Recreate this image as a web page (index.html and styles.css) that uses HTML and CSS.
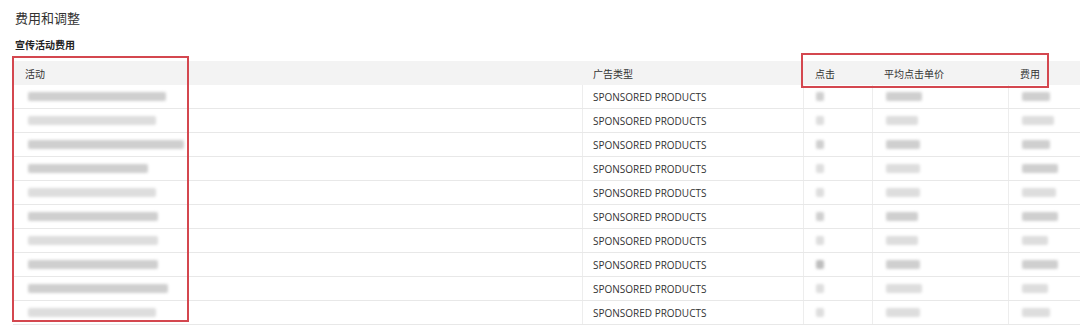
FILE: index.html
```html
<!DOCTYPE html>
<html lang="zh-CN">
  <head>
    <meta charset="UTF-8" />
    <meta name="viewport" content="width=device-width, initial-scale=1.0" />
    <title>费用和调整</title>
    <link rel="stylesheet" href="styles.css">
  </head>
  <body>
    <!-- Título da seção -->
    <h1 class="page-title">费用和调整</h1>
    <h2 class="sub-title">宣传活动费用</h2>

    <div class="table-wrap">
      <div class="grid">
        <div class="row head">
          <div class="cell">活动</div>
          <div class="cell">广告类型</div>
          <div class="cell">点击</div>
          <div class="cell">平均点击单价</div>
          <div class="cell">费用</div>
        </div>

        <div class="row">
          <div class="cell"><span class="mask" style="width:138px"></span></div>
          <div class="cell">SPONSORED PRODUCTS</div>
          <div class="cell"><span class="mask small"></span></div>
          <div class="cell"><span class="mask" style="width:36px"></span></div>
          <div class="cell"><span class="mask" style="width:28px"></span></div>
        </div>
        <div class="row">
          <div class="cell"><span class="mask light" style="width:128px"></span></div>
          <div class="cell">SPONSORED PRODUCTS</div>
          <div class="cell"><span class="mask small light"></span></div>
          <div class="cell"><span class="mask light" style="width:32px"></span></div>
          <div class="cell"><span class="mask light" style="width:32px"></span></div>
        </div>
        <div class="row">
          <div class="cell"><span class="mask" style="width:156px"></span></div>
          <div class="cell">SPONSORED PRODUCTS</div>
          <div class="cell"><span class="mask small"></span></div>
          <div class="cell"><span class="mask" style="width:34px"></span></div>
          <div class="cell"><span class="mask" style="width:28px"></span></div>
        </div>
        <div class="row">
          <div class="cell"><span class="mask" style="width:120px"></span></div>
          <div class="cell">SPONSORED PRODUCTS</div>
          <div class="cell"><span class="mask small light"></span></div>
          <div class="cell"><span class="mask light" style="width:34px"></span></div>
          <div class="cell"><span class="mask" style="width:36px"></span></div>
        </div>
        <div class="row">
          <div class="cell"><span class="mask light" style="width:128px"></span></div>
          <div class="cell">SPONSORED PRODUCTS</div>
          <div class="cell"><span class="mask small light"></span></div>
          <div class="cell"><span class="mask light" style="width:34px"></span></div>
          <div class="cell"><span class="mask light" style="width:34px"></span></div>
        </div>
        <div class="row">
          <div class="cell"><span class="mask" style="width:130px"></span></div>
          <div class="cell">SPONSORED PRODUCTS</div>
          <div class="cell"><span class="mask small"></span></div>
          <div class="cell"><span class="mask" style="width:32px"></span></div>
          <div class="cell"><span class="mask" style="width:36px"></span></div>
        </div>
        <div class="row">
          <div class="cell"><span class="mask light" style="width:130px"></span></div>
          <div class="cell">SPONSORED PRODUCTS</div>
          <div class="cell"><span class="mask small light"></span></div>
          <div class="cell"><span class="mask light" style="width:32px"></span></div>
          <div class="cell"><span class="mask light" style="width:26px"></span></div>
        </div>
        <div class="row">
          <div class="cell"><span class="mask" style="width:130px"></span></div>
          <div class="cell">SPONSORED PRODUCTS</div>
          <div class="cell"><span class="mask small dark"></span></div>
          <div class="cell"><span class="mask" style="width:34px"></span></div>
          <div class="cell"><span class="mask" style="width:36px"></span></div>
        </div>
        <div class="row">
          <div class="cell"><span class="mask" style="width:140px"></span></div>
          <div class="cell">SPONSORED PRODUCTS</div>
          <div class="cell"><span class="mask small light"></span></div>
          <div class="cell"><span class="mask light" style="width:36px"></span></div>
          <div class="cell"><span class="mask light" style="width:26px"></span></div>
        </div>
        <div class="row">
          <div class="cell"><span class="mask light" style="width:128px"></span></div>
          <div class="cell">SPONSORED PRODUCTS</div>
          <div class="cell"><span class="mask small light"></span></div>
          <div class="cell"><span class="mask light" style="width:34px"></span></div>
          <div class="cell"><span class="mask light" style="width:28px"></span></div>
        </div>
      </div>

      <!-- Destaques em vermelho -->
      <div class="mark mark-campaign"></div>
      <div class="mark mark-metrics"></div>
    </div>
  </body>
</html>
```

FILE: styles.css
```css
/* Reset básico */
body,
h1,
h2 {
  margin: 0;
  padding: 0;
  box-sizing: border-box;
}

body {
  width: 1080px;
  height: 328px;
  overflow: hidden;
  background-color: #ffffff;
  color: #333;
  font-family: 'Open Sans', 'Noto Sans CJK SC', sans-serif;
  font-size: 10px;
}

.page-title {
  font-size: 13px;
  font-weight: normal;
  color: #333;
  line-height: 18px;
  padding: 9px 0 0 15px;
}

.sub-title {
  font-size: 10px;
  font-weight: bold;
  color: #222;
  line-height: 14px;
  padding: 11px 0 0 15px;
}

/* Tabela de campanhas */
.table-wrap {
  position: relative;
  margin-top: 9px;
}

.grid {
  margin-left: 13px;
}

.row {
  display: grid;
  grid-template-columns: 569px 221px 69px 136px 1fr;
  height: 24px;
  border-bottom: 1px solid #e8e8e8;
  box-sizing: border-box;
}

.row.head {
  background-color: #f3f3f3;
  border-bottom: none;
  color: #444;
  height: 24px;
}

.cell {
  display: flex;
  align-items: center;
  padding-left: 12px;
  white-space: nowrap;
  color: #333;
}

.row:not(.head) .cell + .cell {
  border-left: 1px solid #ededed;
  padding-left: 10px;
}

.row.head .cell:nth-child(2) {
  padding-left: 11px;
}

/* Dados ocultos (borrados) */
.mask {
  display: inline-block;
  height: 9px;
  margin-left: 3px;
  background-color: #cfcfcf;
  border-radius: 2px;
  filter: blur(1.5px);
}

.mask.light {
  background-color: #dddddd;
}

.mask.small {
  width: 8px;
  margin-left: 2px;
}

.mask.dark {
  background-color: #bdbdbd;
}

/* Caixas de destaque */
.mark {
  position: absolute;
  border: 2px solid #d4474f;
  box-sizing: border-box;
}

.mark-campaign {
  left: 12px;
  top: -5px;
  width: 177px;
  height: 266px;
}

.mark-metrics {
  left: 801px;
  top: -8px;
  width: 248px;
  height: 35px;
}
```
